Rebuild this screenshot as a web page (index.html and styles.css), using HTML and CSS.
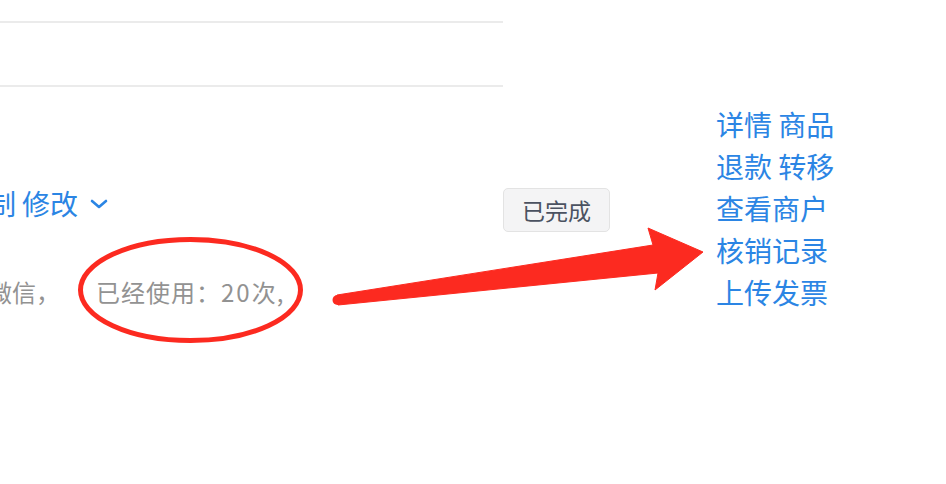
FILE: index.html
```html
<!DOCTYPE html>
<html lang="zh-CN">
<head>
<meta charset="utf-8">
<title>订单</title>
<link rel="stylesheet" href="styles.css">
</head>
<body>
<div class="page">
  <div class="header-rules"></div>
  <div class="row">
    <div class="main-cell">
      <div class="ops">
        <span class="op">复制</span><span class="op">修改</span><svg class="chev" width="18" height="10" viewBox="0 0 18 10"><path d="M2 2 L9 8 L16 2" fill="none" stroke="#2b85e4" stroke-width="2.6" stroke-linecap="round" stroke-linejoin="round"/></svg>
      </div>
      <div class="info">
        <span class="info-a">微信，</span><span class="info-b">已经使用：<span class="num">20</span>次,</span>
      </div>
    </div>
    <div class="status-cell">
      <span class="status-btn">已完成</span>
    </div>
    <div class="actions-cell">
      <div class="act-line"><a class="act">详情</a> <a class="act">商品</a></div>
      <div class="act-line"><a class="act">退款</a> <a class="act">转移</a></div>
      <div class="act-line"><a class="act">查看商户</a></div>
      <div class="act-line"><a class="act">核销记录</a></div>
      <div class="act-line"><a class="act">上传发票</a></div>
    </div>
  </div>
  <svg class="annot" width="946" height="484" viewBox="0 0 946 484">
    <ellipse cx="190.5" cy="290" rx="110" ry="50.5" fill="none" stroke="#fc2a20" stroke-width="5"/>
    <polygon points="337,295 653,245 648,228 703,252 655,290 658,273 338,305" fill="#fc2a20" stroke="#fc2a20" stroke-width="1" stroke-linejoin="round"/>
    <circle cx="337.5" cy="300" r="5" fill="#fc2a20"/>
  </svg>
</div>
</body>
</html>
```

FILE: styles.css
```css
html, body {
  margin: 0;
  padding: 0;
  background: #ffffff;
}

body {
  width: 946px;
  height: 484px;
  overflow: hidden;
  font-family: "Noto Sans CJK SC", "Noto Sans", sans-serif;
}

.page {
  position: relative;
  width: 946px;
  height: 484px;
  overflow: hidden;
}

.header-rules {
  width: 503px;
  height: 62px;
  margin-top: 21px;
  border-top: 2px solid #ebebeb;
  border-bottom: 2px solid #ebebeb;
}

.row {
  display: flex;
  align-items: flex-start;
}

.main-cell {
  width: 503px;
  flex: none;
  padding-top: 96px;
}

.ops {
  display: flex;
  align-items: center;
  height: 40px;
  margin-left: -40px;
  font-size: 28px;
  line-height: 40px;
  color: #2b85e4;
  white-space: nowrap;
}

.op {
  margin-right: 6px;
}

.chev {
  margin-left: 6px;
  margin-top: 2px;
}

.info {
  margin-top: 52px;
  margin-left: -12px;
  height: 34px;
  font-size: 24px;
  line-height: 34px;
  color: #929292;
  white-space: nowrap;
}

.info-b {
  margin-left: 36px;
  letter-spacing: 1px;
}

.num {
  letter-spacing: 2px;
}

.status-cell {
  flex: none;
  width: 213px;
  padding-top: 101px;
}

.status-btn {
  display: inline-block;
  box-sizing: border-box;
  width: 107px;
  height: 44px;
  border: 1px solid #e3e3e3;
  border-radius: 5px;
  background: #f4f4f5;
  color: #4b5261;
  font-size: 23px;
  line-height: 42px;
  text-align: center;
}

.actions-cell {
  flex: none;
  padding-top: 16px;
}

.act-line {
  height: 42px;
  font-size: 28px;
  line-height: 42px;
  white-space: nowrap;
}

.act {
  color: #2b85e4;
  text-decoration: none;
}

.annot {
  position: absolute;
  left: 0;
  top: 0;
}
```
